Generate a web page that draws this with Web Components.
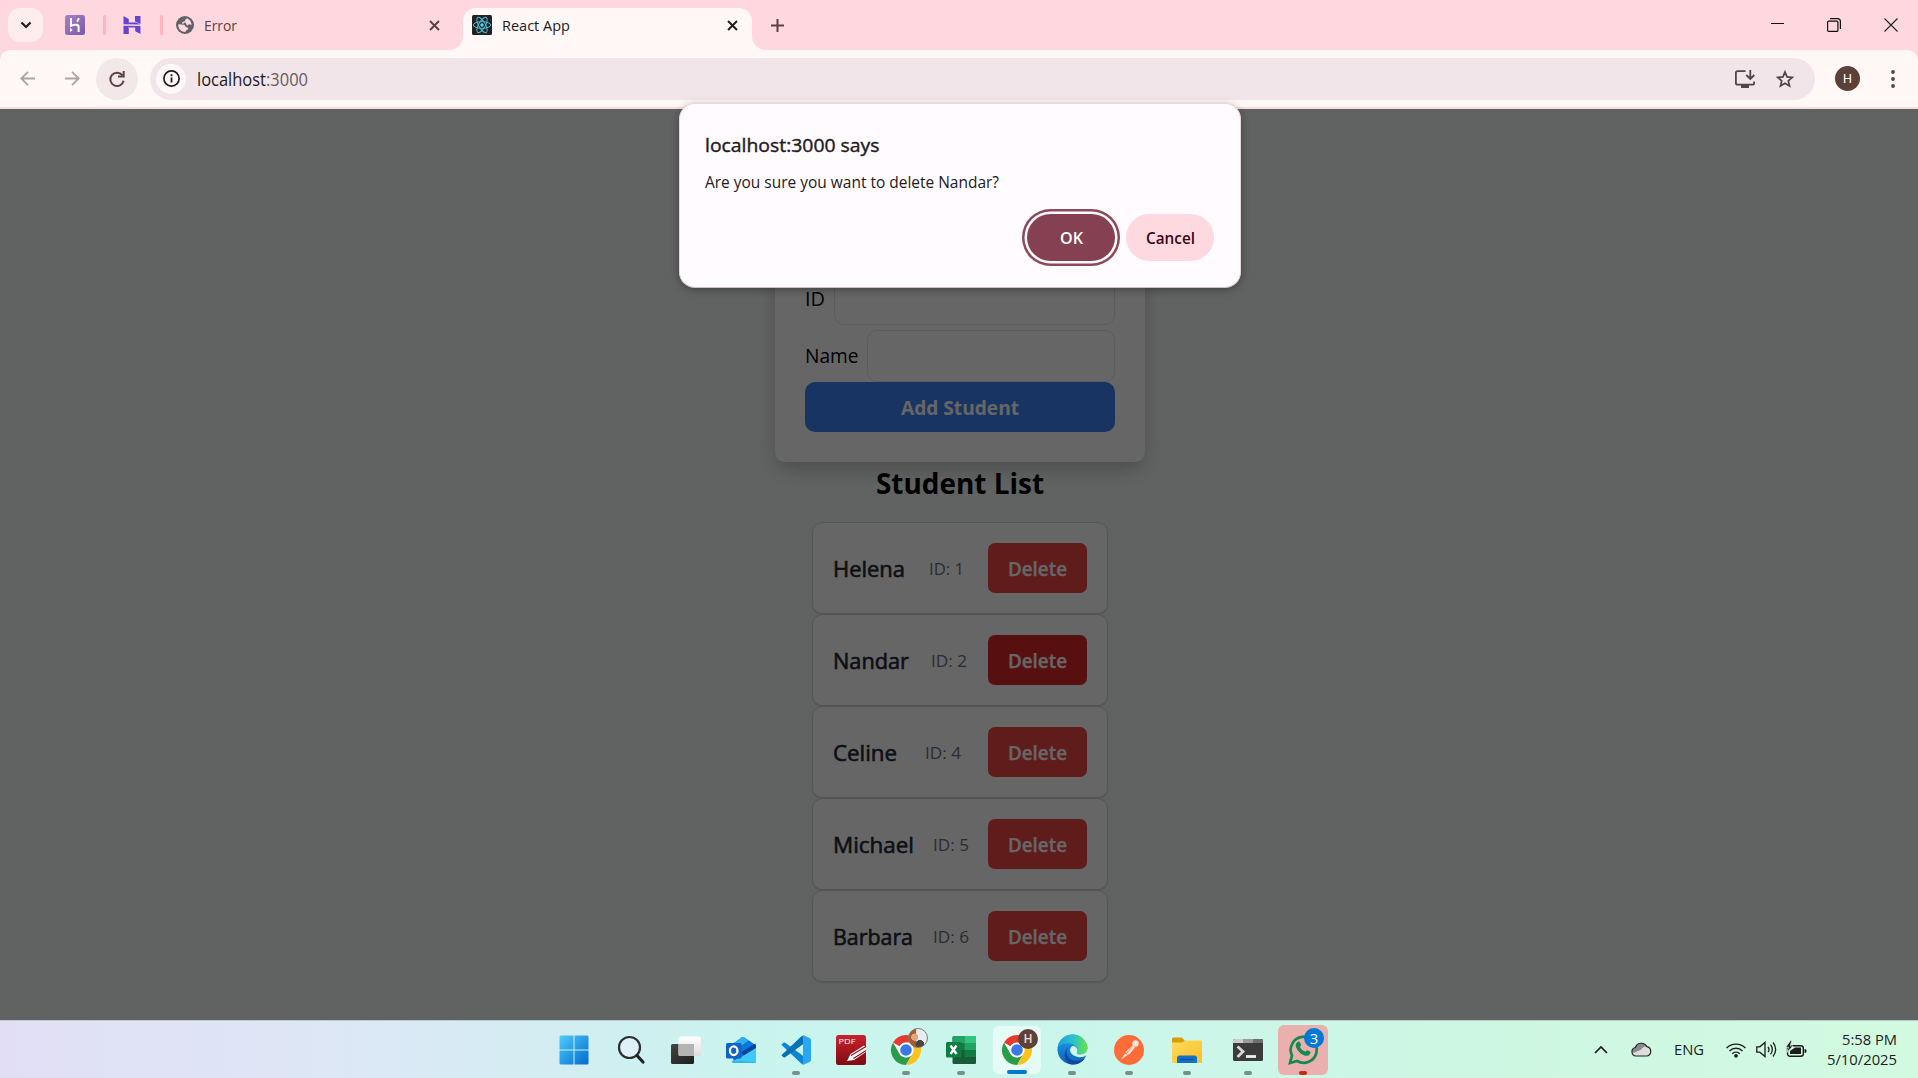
<!DOCTYPE html>
<html lang="en">
<head>
<meta charset="utf-8">
<title>React App</title>
<style>
html,body{margin:0;height:100%;overflow:hidden}
body{font-family:"Open Sans","Noto Sans",sans-serif;color:#231a1c}
</style>
</head>
<body>
<desktop-screen></desktop-screen>
<script>
const define = (name, html, setup) => {
  const t = document.createElement('template');
  t.innerHTML = html;
  customElements.define(name, class extends HTMLElement {
    connectedCallback() {
      if (this.shadowRoot) return;
      this.attachShadow({mode: 'open'}).appendChild(t.content.cloneNode(true));
      if (setup) setup(this, this.shadowRoot);
    }
  });
};

/* Text condensed or widened to an exact width. */
define('fit-text', `<style>
:host{display:block;flex:none;white-space:nowrap;overflow:visible;line-height:24px}
span{display:inline-block;transform-origin:0 50%}
</style><span></span>`, (el, root) => {
  const s = root.querySelector('span');
  s.textContent = el.getAttribute('text');
  const w = +el.getAttribute('w');
  el.style.width = w + 'px';
  s.style.transform = `scaleX(${w / s.getBoundingClientRect().width})`;
});

const chrome = `<circle cx="15" cy="15" r="15" fill="#fff"/>
<path d="M2 7.5A15 15 0 0 1 28 7.5H15a7.5 7.5 0 0 0-6.5 3.8z" fill="#e33b2e"/>
<path d="M2 7.5A15 15 0 0 0 15 30l6.5-11.2A7.5 7.5 0 0 1 8.5 18.8z" fill="#2a9b48"/>
<path d="M28 7.5A15 15 0 0 1 15 30l6.5-11.2A7.5 7.5 0 0 0 15 7.5z" fill="#fcc31e"/>
<circle cx="15" cy="15" r="7.3" fill="#fff"/><circle cx="15" cy="15" r="5.8" fill="#3b78e7"/>`;

const ICONS = {
 chevdown:[12,8,'<path d="M1.5 1.5 6 6l4.5-4.5" fill="none" stroke="#231a1c" stroke-width="2.2"/>'],
 heroku:[20,20,'<defs><linearGradient id="a" x2="1" y2="1"><stop stop-color="#a583c6"/><stop offset="1" stop-color="#7a5aa6"/></linearGradient></defs><rect width="20" height="20" rx="2.5" fill="url(#a)"/><path d="M6 3v7.800c3-1.400 7.600-1.800 7.600.9V17M13.600 3c0 1.600-.6 2.800-1.600 3.800" fill="none" stroke="#fff" stroke-width="2"/><path d="M5 12.700v4.600l2.600-2.300z" fill="#fff"/>'],
 hostinger:[18,20,'<path fill="#6644d2" d="M.5 9.300V1l5.300 3v3.400l7.200.1 4.600 2zM12 6.600V1l5.500-.1V9zM.5 19V10.800l16.900.1.1 8-5.300-2.700v-3.600l-7-.1zM.5 11l5.300 2.200V19H.5z"/>'],
 globe:[18,18,'<circle cx="9" cy="9" r="9" fill="#5f6368"/><path d="M10.800 2.200c1.700.4 4.700 3 4.800 6.400-.6.9-1.600-.5-2.400-.4-1 .2-1 1.500-2 1.200-1.200-.4-.7-2.100-2-2.800-.8-.5-1.500.1-1.700 1-.4.8-1.800-.1-1.400-1C6.700 5.300 9 5.400 9.300 4.200c.2-.8.5-1.400 1.500-2zM2.200 8.200l5.700.5c1.600.2 1 2.200 2.600 2.500 1.300.3 2 .4 1.600 1.700-.3.900-1.600.7-2 1.600-.3.700-.4 1.400-1.100 1.500C4.500 15.700 1.900 12 2.200 8.200z" fill="#ffd7df"/>'],
 x:[11,11,'<path d="M1 1l9 9M10 1l-9 9" stroke="currentColor" stroke-width="1.9"/>'],
 react:[20,20,'<rect width="20" height="20" rx="1.5" fill="#202224"/><g fill="none" stroke="#4fb8d2" stroke-width="1"><ellipse cx="10" cy="10" rx="8.700" ry="3.300"/><ellipse cx="10" cy="10" rx="8.700" ry="3.300" transform="rotate(60 10 10)"/><ellipse cx="10" cy="10" rx="8.700" ry="3.300" transform="rotate(120 10 10)"/></g><circle cx="10" cy="10" r="1.700" fill="#61dafb"/>'],
 plus:[13,13,'<path d="M6.500 0v13M0 6.500h13" stroke="#5b4145" stroke-width="2"/>'],
 min:[13,13,'<path d="M0 5.500h13" stroke="#111" stroke-width="1"/>'],
 restore:[14,14,'<rect x=".6" y="3.100" width="10.300" height="10.300" rx="1" fill="none" stroke="#111" stroke-width="1.200"/><path d="M3 .6h7.500a2.900 2.900 0 0 1 2.900 2.900V11" fill="none" stroke="#111" stroke-width="1.200"/>'],
 close:[14,14,'<path d="M.5.5l13 13M13.500.5l-13 13" stroke="#222" stroke-width="1.100"/>'],
 back:[15,15,'<path d="M15 7.500H1.500M8 .8 1.300 7.500 8 14.200" fill="none" stroke="#b1a2a4" stroke-width="1.800"/>'],
 fwd:[15,15,'<path d="M0 7.500h13.500M7 .8l6.700 6.700L7 14.200" fill="none" stroke="#b1a2a4" stroke-width="1.800"/>'],
 reload:[16,16,'<path d="M13.300 4.200A6.700 6.700 0 1 0 14.600 9.800M14.700 0v5.600H9" fill="none" stroke="#5b4145" stroke-width="2"/>'],
 info:[17,17,'<circle cx="8.500" cy="8.500" r="7.600" fill="none" stroke="#231a1c" stroke-width="1.700"/><path d="M8.500 7.600v5M8.500 4.300v1.900" stroke="#231a1c" stroke-width="1.800"/>'],
 install:[20,18,'<path d="M10.500 1.200H2.400A1.500 1.500 0 0 0 .9 2.700v10.500a1.500 1.500 0 0 0 1.500 1.500h15.200a1.500 1.500 0 0 0 1.500-1.500v-1.700M15.300 0v8M11.300 5l4 4 4-4" fill="none" stroke="#52434a" stroke-width="1.800"/><path d="M6 14.500h8V18H6z" fill="#52434a"/>'],
 star:[18,18,'<path d="M9 2l2.050 4.900 5.200.45-3.950 3.450 1.200 5.100L9 13.200l-4.500 2.700 1.200-5.100L1.750 7.350l5.200-.45z" fill="none" stroke="#52434a" stroke-width="1.700"/>'],
 dots:[4,18,'<g fill="#5b4145"><circle cx="2" cy="2" r="1.900"/><circle cx="2" cy="9" r="1.900"/><circle cx="2" cy="16" r="1.900"/></g>'],
 flareL:[14,14,'<path d="M14 0v14H0A14 14 0 0 0 14 0z" fill="#fff8f6"/>'],
 flareR:[14,14,'<path d="M0 0v14h14A14 14 0 0 1 0 0z" fill="#fff8f6"/>'],
 start:[30,30,'<defs><linearGradient id="a" gradientUnits="userSpaceOnUse" x2="30" y2="30"><stop stop-color="#4fd0fb"/><stop offset="1" stop-color="#0067cf"/></linearGradient></defs><path d="M2 .5h12.500v14H.5V2A1.500 1.500 0 0 1 2 .5zM15.500.5H28A1.500 1.500 0 0 1 29.500 2v12.500h-14zM.5 15.500h14v14H2A1.500 1.500 0 0 1 .5 28zM15.500 15.500h14V28a1.500 1.500 0 0 1-1.500 1.500H15.500z" fill="url(#a)"/>'],
 search:[28,30,'<circle cx="12.500" cy="12.500" r="10.500" fill="#dff1f5" stroke="#2b2f30" stroke-width="2.200"/><path d="M20 20.500l6 6.500" stroke="#222" stroke-width="3.200" stroke-linecap="round"/>'],
 task:[30,30,'<defs><linearGradient id="a" x2="1" y2="1"><stop stop-color="#444"/><stop offset="1" stop-color="#1d1d1d"/></linearGradient><linearGradient id="b" x2="0" y2="1"><stop stop-color="#fff"/><stop offset="1" stop-color="#ddd"/></linearGradient></defs><rect y="9" width="23" height="20" rx="1.500" fill="url(#a)"/><rect x="7.500" y="1.500" width="22.500" height="19.500" rx="1.500" fill="url(#b)"/><path d="M7.500 9H23v12H9a1.500 1.500 0 0 1-1.500-1.500z" fill="#b4b4b4"/>'],
 outlook:[30,30,'<path d="M4.500 10.500 16 2.200q1-.6 2 0L30 11v14.500a2.500 2.500 0 0 1-2.500 2.500H8z" fill="#0f6fd0"/><path d="M4.500 10.500 16 2.200q1-.6 2 0L23 5.500 12 14z" fill="#2ab0ee"/><path d="M12 13 23 5.500l7 5-14 9z" fill="#0a78dc"/><path d="M15.500 17 29.500 8.500 30 13 18 22z" fill="#0a449c"/><path d="M16 21.500 30 13v12.500a2.500 2.500 0 0 1-2.500 2.500H8q-1.500 0-2-1.500z" fill="#3fc9f6"/><path d="M8 28q-2 0-2.500-2h10l14 1q-.8 1-2 1z" fill="#2fb4ec"/><rect x="0" y="8" width="15.500" height="15.500" rx="1.500" fill="#0f62c8"/><ellipse cx="7.700" cy="15.700" rx="3.800" ry="4.300" fill="none" stroke="#fff" stroke-width="2.300"/>'],
 vscode:[30,30,'<path d="M.4 9.700l2-1.900q.9-.7 1.800 0L23 21.500V28.500L20.700 29z" fill="#0c86d3"/><path d="M.4 20.300l2 1.900q.9.700 1.800 0L23 8.500V1.500L20.700 1z" fill="#0871b5"/><path d="M20.700.8Q21.700-.1 22.500.3L29 3.200q1 .5 1 1.500v20.600q0 1-1 1.500l-6.500 2.900q-1 .4-1.800-.5l1.300.1V.8z" fill="#2aa7f4"/>'],
 pdf:[30,30,'<defs><linearGradient id="a" x2="0" y2="1"><stop stop-color="#cf202c"/><stop offset="1" stop-color="#7d0b12"/></linearGradient></defs><rect width="30" height="30" rx="2.500" fill="url(#a)"/><path d="M11 26l3.500-7L28 10.500l2 2V17L18 25z" fill="#fff"/><path d="M15 20.500 30 11.500M17.500 23.500 30 15.500" stroke="#9a1119" stroke-width="1.200"/><text x="2.500" y="8.700" font-family="Open Sans" font-size="7.900" fill="#fff" textLength="17" lengthAdjust="spacingAndGlyphs">PDF</text>'],
 chrome:[30,30,chrome],
 excel:[30,30,'<path d="M8 1h21a1 1 0 0 1 1 1v26a1 1 0 0 1-1 1H8a1.500 1.500 0 0 1-1.500-1.500v-25A1.500 1.500 0 0 1 8 1z" fill="#185c37"/><path d="M6.500 2.500A1.500 1.500 0 0 1 8 1h10.500v7h-12z" fill="#21a366"/><path d="M18.500 1H29a1 1 0 0 1 1 1v6H18.500z" fill="#33c481"/><path d="M6.500 8h12v7h-12z" fill="#107c41"/><path d="M18.500 8H30v7H18.500z" fill="#21a366"/><path d="M18.500 15H30v7H18.500z" fill="#107c41"/><rect y="7" width="15.500" height="15.500" rx="1.500" fill="#107c41"/><path d="M4.500 10.500l6 8.500M10.500 10.500l-6 8.500" stroke="#fff" stroke-width="2.400"/>'],
 edge:[31,31,'<defs><linearGradient id="a" x2="1"><stop stop-color="#1b9de2"/><stop offset=".55" stop-color="#2ec4c9"/><stop offset="1" stop-color="#6be33f"/></linearGradient><linearGradient id="b" x2="0" y2="1"><stop stop-color="#1aa0e6"/><stop offset="1" stop-color="#0f62bd"/></linearGradient></defs><circle cx="15.500" cy="15.500" r="15" fill="url(#b)"/><path d="M.6 14A15 15 0 0 1 30.500 14.500c0 5-4.500 6.500-8 6-2.500-.3-3.200-1.300-2.300-2.600C22 14.500 18 9.800 12.500 9.500 7 9 2 11 .6 14z" fill="url(#a)"/><path d="M12 12.500c-3.500 3.500-3 8.500.5 12 3.500 3.300 9.500 3.300 15.500-.2-3.500 5.200-9.500 7-14.500 6C7 29 5.500 17.500 12 12.500z" fill="#11489c"/><path d="M14.700 12.600c-3.700 3.200-1 9.900 7.300 10.600 3.200.2 5.700-.8 7.200-1.700 1.200-.5 1.600.2 1 .9l2-3V14l-2 1.500c-.5 3.500-4 5.200-7.700 4.900-2.500-.2-3.200-1.300-2.300-2.500 1.200-2-1.500-7.500-5.500-5.300z" fill="#cdf5ea"/>'],
 postman:[30,30,'<circle cx="15" cy="15" r="15" fill="#ff6c37"/><path d="M7 24.500l6-9 6-5 2 2-5 6z" fill="#ffe6dc"/><circle cx="21.500" cy="8.500" r="3.200" fill="#ffe6dc"/><path d="M10.500 18l3 1.500M17.500 12.500 12 19" stroke="#ff6c37" stroke-width=".8"/>'],
 folder:[30,30,'<defs><linearGradient id="a" x2="1" y2="1"><stop stop-color="#ffdc5e"/><stop offset="1" stop-color="#fbbd2a"/></linearGradient></defs><path d="M0 8V4a1.500 1.500 0 0 1 1.500-1.500h8.500L13 6h4v3z" fill="#dc9b0e"/><path d="M0 7.500h10.500L13 5.500h16a1 1 0 0 1 1 1V27a1 1 0 0 1-1 1H1a1 1 0 0 1-1-1z" fill="url(#a)"/><path d="M5 28v-5a2.500 2.500 0 0 1 2.500-2.500h15A2.500 2.500 0 0 1 25 23v5z" fill="#1172c5"/><path d="M8.500 24.500h13" stroke="#0b4d8c" stroke-width="1.200"/>'],
 terminal:[30,30,'<rect y="4" width="30" height="22" rx="1.500" fill="#3b3b3b"/><path d="M0 8V5.500A1.500 1.500 0 0 1 1.500 4H10v4z" fill="#ccc"/><path d="M10 4h10v4H10z" fill="#9a9a9a"/><path d="M20 4h8.500A1.500 1.500 0 0 1 30 5.500V8H20z" fill="#6e6e6e"/><path d="M4.500 11.500l5.500 5-5.500 5.500" fill="none" stroke="#d6d6d6" stroke-width="2.800"/><path d="M13 21.500h10" stroke="#eee" stroke-width="2.800"/>'],
 whatsapp:[30,31,'<path d="M2 29l2-7.500A13 13 0 1 1 9 27z" fill="none" stroke="#148a50" stroke-width="2.700"/><path d="M9.300 8.200c1-1 2.200-.8 2.700.2l1 2.300c.3.800-.9 1.800-1 2.300.8 2 2.800 3.800 5 4.600.7 0 1.500-1.600 2.300-1.400l2.600 1.200c1 .6.700 1.700.1 2.500-1.600 2-3.600 2.300-6 1.300-3.800-1.400-6.500-4.300-8-8-.6-1.800-.2-3.600 1.300-5z" fill="#148a50"/>'],
 up:[14,8,'<path d="M1 7l6-6 6 6" fill="none" stroke="#1c1c1c" stroke-width="1.700"/>'],
 cloud:[21,15,'<path d="M5 14a4.300 4.300 0 0 1-.6-8.500A6.200 6.200 0 0 1 15.800 4.600 4.800 4.800 0 0 1 16 14z" fill="#dedede"/><path d="M1 8.500a4 4 0 0 1 3.400-3A6.200 6.200 0 0 1 15.800 4.600q-4 .2-5.500 3L2.500 11z" fill="#8b8b8b"/><path d="M5 14a4.300 4.300 0 0 1-.6-8.500A6.200 6.200 0 0 1 15.800 4.600 4.800 4.800 0 0 1 16 14z" fill="none" stroke="#222" stroke-width="1.200"/>'],
 wifi:[20,16,'<g fill="none" stroke="#1c1c1c" stroke-width="1.400"><path d="M.6 6a13.300 13.300 0 0 1 18.800 0M3.500 8.900a9.200 9.200 0 0 1 13 0M6.300 11.700a5.200 5.200 0 0 1 7.400 0"/></g><circle cx="10" cy="13.800" r="1.900" fill="#1c1c1c"/>'],
 speaker:[21,17,'<g fill="none" stroke="#1c1c1c" stroke-width="1.300"><path d="M.8 5.800h3L9 1.500v14l-5.200-4.300h-3z"/><path d="M12 5.800a4.500 4.500 0 0 1 0 5.400M14.500 3.600a7.500 7.500 0 0 1 0 9.800M17 1.500a10.500 10.500 0 0 1 0 14"/></g>'],
 battery:[21,17,'<rect x="1.500" y="4.700" width="15.800" height="10.600" rx="2.500" fill="none" stroke="#1c1c1c" stroke-width="1.400"/><path d="M4 13V10l5-3.500h6V13z" fill="#1c1c1c"/><path d="M18.500 8v4c1.700 0 2-.8 2-2s-.3-2-2-2z" fill="#1c1c1c"/><path d="M4.500-.5-.3 6.200h2.800L.8 11.700 7 5H4.200L6-.5z" fill="#1c1c1c" stroke="#cff7e0" stroke-width=".8"/>']
};
define('ui-icon', `<style>:host{display:block;flex:none}svg{display:block;overflow:visible}</style>`, (el, root) => {
  const [w, h, body] = ICONS[el.getAttribute('name')];
  root.innerHTML += `<svg width="${w}" height="${h}" viewBox="0 0 ${w} ${h}">${body}</svg>`;
});

define('tab-strip', `<style>
:host{display:flex;height:50px;background:#ffd7df;align-items:center;box-sizing:border-box}
.btn{width:35px;height:34px;margin-left:8px;border-radius:12px;background:#ffecef;display:flex;align-items:center;justify-content:center}
.sep{width:3px;height:20px;border-radius:1.5px;background:#ffb4c0}
.active{align-self:flex-end;width:289px;height:42px;border-radius:13px 13px 0 0;background:#fff8f6;display:flex;align-items:center;box-sizing:border-box;padding:0 14px 8px 9px;color:#231a1c}
.flare{align-self:flex-end}
fit-text{font-size:14.600px}
.win{margin-left:auto;display:flex;gap:43px;padding-right:20px}
</style>
<div class="btn"><ui-icon name="chevdown"></ui-icon></div>
<ui-icon name="heroku" style="margin-left:22px"></ui-icon>
<div class="sep" style="margin-left:18px"></div>
<ui-icon name="hostinger" style="margin-left:17px"></ui-icon>
<div class="sep" style="margin-left:19px"></div>
<ui-icon name="globe" style="margin-left:13px"></ui-icon>
<fit-text text="Error" w="33" style="margin-left:10px;color:#5b4145"></fit-text>
<ui-icon name="x" style="margin-left:192px;color:#5b4145"></ui-icon>
<ui-icon class="flare" name="flareL" style="margin-left:9px"></ui-icon>
<div class="active"><ui-icon name="react"></ui-icon><fit-text text="React App" w="68" style="margin-left:10px"></fit-text><ui-icon name="x" style="margin-left:auto"></ui-icon></div>
<ui-icon class="flare" name="flareR"></ui-icon>
<ui-icon name="plus" style="margin-left:5px"></ui-icon>
<div class="win"><ui-icon name="min"></ui-icon><ui-icon name="restore"></ui-icon><ui-icon name="close"></ui-icon></div>`);

define('address-bar', `<style>
:host{display:block;background:#ffd7df}
.bar{display:flex;align-items:center;height:59px;box-sizing:border-box;background:#fff8f6;border-radius:10px 10px 0 0;border-bottom:2px solid #f5dde0}
.reload{width:42px;height:42px;border-radius:50%;background:#f2e7e9;margin-left:16px;display:flex;align-items:center;justify-content:center}
.omni{width:1665px;height:42px;border-radius:21px;background:#f1e5ea;margin-left:12px;display:flex;align-items:center;box-sizing:border-box;padding:0 21px 0 6px}
.info{width:30px;height:30px;border-radius:50%;background:#fff8f8;display:flex;align-items:center;justify-content:center}
.url{display:flex;font-size:17.400px;margin-left:10.500px}
.av{width:25px;height:25px;border-radius:50%;background:#5d4037;color:#fff;margin-left:20px;font:12.500px/25px Roboto,sans-serif;text-align:center}
</style>
<div class="bar">
<ui-icon name="back" style="margin-left:20px"></ui-icon><ui-icon name="fwd" style="margin-left:30px"></ui-icon>
<div class="reload"><ui-icon name="reload"></ui-icon></div>
<div class="omni"><div class="info"><ui-icon name="info"></ui-icon></div>
<div class="url"><fit-text text="localhost" w="69"></fit-text><fit-text text=":3000" w="42" style="color:#6b5a60"></fit-text></div>
<ui-icon name="install" style="margin-left:auto"></ui-icon><ui-icon name="star" style="margin-left:21px"></ui-icon></div>
<div class="av">H</div><ui-icon name="dots" style="margin-left:30.500px"></ui-icon>
</div>`);

define('student-form', `<style>
:host{display:flex;flex-direction:column;width:370px;height:262px;flex:none;box-sizing:border-box;padding:0 30px 30px;justify-content:flex-end;background:#fff;border-radius:10px;box-shadow:0 12px 19px -4px #0002,0 5px 22px #0000001c;font-size:19.500px;color:#000}
.row{display:flex;justify-content:space-between;align-items:center}
.row fit-text{padding-bottom:1px;margin-left:-.5px}
.in{height:52px;box-sizing:border-box;border:1px solid #e2e4e8;border-radius:10px}
.add{height:50px;border-radius:10px;background:#3b82f6;color:#fff;font-weight:700;display:flex;align-items:center;justify-content:center;padding-top:2px;box-sizing:border-box}
</style>
<div class="row"><fit-text text="ID" w="20"></fit-text><div class="in" style="width:281px"></div></div>
<div class="row" style="margin-top:5px"><fit-text text="Name" w="53.500"></fit-text><div class="in" style="width:248px"></div></div>
<div class="add"><fit-text text="Add Student" w="118"></fit-text></div>`);

define('student-row', `<style>
:host{display:flex;align-items:center;justify-content:space-between;width:296px;height:92px;box-sizing:border-box;padding:0 20px;border:1px solid #d1d5db;border-radius:10px;background:#fff;box-shadow:0 1px 2px #0000001a}
fit-text{margin-top:2px}
.n{font-size:21.600px;color:#1f2937;-webkit-text-stroke:.6px #1f2937}
.i{font-size:17px;color:#6b7280}
.d{width:99px;height:50px;border-radius:7px;background:#ef4444;color:#fff;font-weight:600;font-size:19px;-webkit-text-stroke:.25px #fff;display:flex;align-items:center;justify-content:center}
:host([hot]) .d{background:#dc2626}
</style><div class="d"><fit-text text="Delete" w="59"></fit-text></div>`, (el, root) => {
  const [n, nw, id, iw] = el.getAttribute('data').split(',');
  const btn = root.querySelector('.d');
  const add = (cls, text, w) => {
    const f = document.createElement('fit-text');
    f.className = cls;
    f.setAttribute('text', text);
    f.setAttribute('w', w);
    root.insertBefore(f, btn);
  };
  add('n', n, nw);
  add('i', 'ID: ' + id, iw);
});

define('student-page', `<style>
:host{display:flex;flex-direction:column;align-items:center;height:911px;background:#f3f7f5;padding-top:91px;padding-left:2px;box-sizing:border-box;overflow:hidden}
h2{margin:0;height:60px;font-size:29px;font-weight:700;color:#000;display:flex;align-items:center;box-sizing:border-box;padding-bottom:19px}
.shade{position:absolute;left:0;top:109px;width:1918px;height:911px;background:#0009}
</style>
<student-form></student-form>
<h2><fit-text text="Student List" w="168"></fit-text></h2>
<student-row data="Helena,72,1,35"></student-row>
<student-row hot data="Nandar,76,2,36"></student-row>
<student-row data="Celine,64,4,36"></student-row>
<student-row data="Michael,81,5,36"></student-row>
<student-row data="Barbara,80,6,36"></student-row>
<div class="shade"></div>`);

define('confirm-dialog', `<style>
:host{position:absolute;left:679px;top:103px;width:562px;height:185px;box-sizing:border-box;border:1.500px solid #ecd6da;border-bottom-color:#cdbfc3;border-radius:16px;background:#fffbff;box-shadow:0 2px 8px #0005;padding:29px 26px 0 25px;display:flex;flex-direction:column}
.b{display:flex;justify-content:flex-end;gap:11px;margin-top:19px}
.b div{width:88px;height:47px;border-radius:23.500px;display:flex;align-items:center;justify-content:center;font-size:15.500px;font-weight:600}
.ok{background:#854152;color:#fff;box-shadow:0 0 0 2.500px #fffbff,0 0 0 5px #8e4858}
.c{background:#ffd9e0;color:#3c0716}
</style>
<fit-text text="localhost:3000 says" w="174.500" style="font-size:18.200px;-webkit-text-stroke:.4px #231a1c"></fit-text>
<fit-text text="Are you sure you want to delete Nandar?" w="294" style="font-size:15.400px;margin-top:14px"></fit-text>
<div class="b"><div class="ok"><fit-text text="OK" w="23"></fit-text></div><div class="c"><fit-text text="Cancel" w="49"></fit-text></div></div>`);

define('task-item', `<style>
:host{display:flex;flex:none;position:relative;width:50px;height:50px;align-items:center;justify-content:center;border-radius:6px}
:host([run])::after{content:"";position:absolute;left:21px;bottom:0;width:8px;height:4px;border-radius:2px;background:#76908a}
:host([on]){background:#e6faf6;width:48px;height:48px;margin-right:1px}
:host([on])::after{left:14px;bottom:0;width:20px;background:#0078d4}
:host([alert]){background:#e9b0ad}
:host([alert])::after{background:#c42b1c}
::slotted(*){position:absolute}
</style><slot></slot>`, (el, root) => {
  const i = document.createElement('ui-icon');
  i.setAttribute('name', el.getAttribute('icon'));
  root.insertBefore(i, root.querySelector('slot'));
});

define('task-bar', `<style>
:host{display:flex;align-items:center;height:58px;box-sizing:border-box;border-top:1px solid #b8cfc9;padding-left:549px;background:linear-gradient(90deg,#e2dff5 0,#dce7f5 350px,#d3edf2 550px,#c9f5ee 780px,#cbf6ea 1150px,#cef7e2 1500px,#d2fae0 100%);color:#1c1c1c}
.bd{right:3px;top:3px;width:20px;height:20px;border-radius:50%;color:#e8dcd8;font:500 12px/20px Roboto,sans-serif;text-align:center;background:#5d4037}
.photo{background:radial-gradient(circle at 60% 85%,#4b4440 0 22%,#0000 24%),radial-gradient(circle at 32% 45%,#e3a678 0 22%,#0000 24%),linear-gradient(90deg,#a85a34 0 38%,#e6edf1 42%);border:1px solid #867a70;box-sizing:border-box}
.three{right:4px;background:#0078d4;color:#fff;font:15px/20px "Open Sans",sans-serif}
.tray{margin-left:auto;display:flex;align-items:center;padding-right:21.500px;font-size:14.400px}
.clock{display:flex;flex-direction:column;align-items:flex-end;margin-left:19.500px}
.clock fit-text{line-height:20px}
</style>
<task-item icon="start"></task-item>
<task-item icon="search" style="margin-left:7px"></task-item>
<task-item icon="task" style="margin-left:5px"></task-item>
<task-item icon="outlook" style="margin-left:5px"></task-item>
<task-item icon="vscode" run style="margin-left:5px"></task-item>
<task-item icon="pdf" style="margin-left:5px"></task-item>
<task-item icon="chrome" run style="margin-left:5px"><div class="bd photo"></div></task-item>
<task-item icon="excel" run style="margin-left:5px"></task-item>
<task-item icon="chrome" run on style="margin-left:7px"><div class="bd">H</div></task-item>
<task-item icon="edge" run style="margin-left:5px"></task-item>
<task-item icon="postman" run style="margin-left:7px"></task-item>
<task-item icon="folder" run style="margin-left:8px"></task-item>
<task-item icon="terminal" run style="margin-left:11px"></task-item>
<task-item icon="whatsapp" run alert style="margin-left:5px"><div class="bd three">3</div></task-item>
<div class="tray"><ui-icon name="up"></ui-icon><ui-icon name="cloud" style="margin-left:23px"></ui-icon>
<fit-text text="ENG" w="30" style="margin-left:22px"></fit-text>
<ui-icon name="wifi" style="margin-left:22px"></ui-icon><ui-icon name="speaker" style="margin-left:10px"></ui-icon><ui-icon name="battery" style="margin-left:9px"></ui-icon>
<div class="clock"><fit-text text="5:58 PM" w="55"></fit-text><fit-text text="5/10/2025" w="70"></fit-text></div></div>`);

define('desktop-screen', `<style>:host{display:flex;flex-direction:column;width:1918px;height:1078px;position:relative;overflow:hidden}</style>
<tab-strip></tab-strip><address-bar></address-bar><student-page></student-page><confirm-dialog></confirm-dialog><task-bar></task-bar>`);
</script>
</body>
</html>
